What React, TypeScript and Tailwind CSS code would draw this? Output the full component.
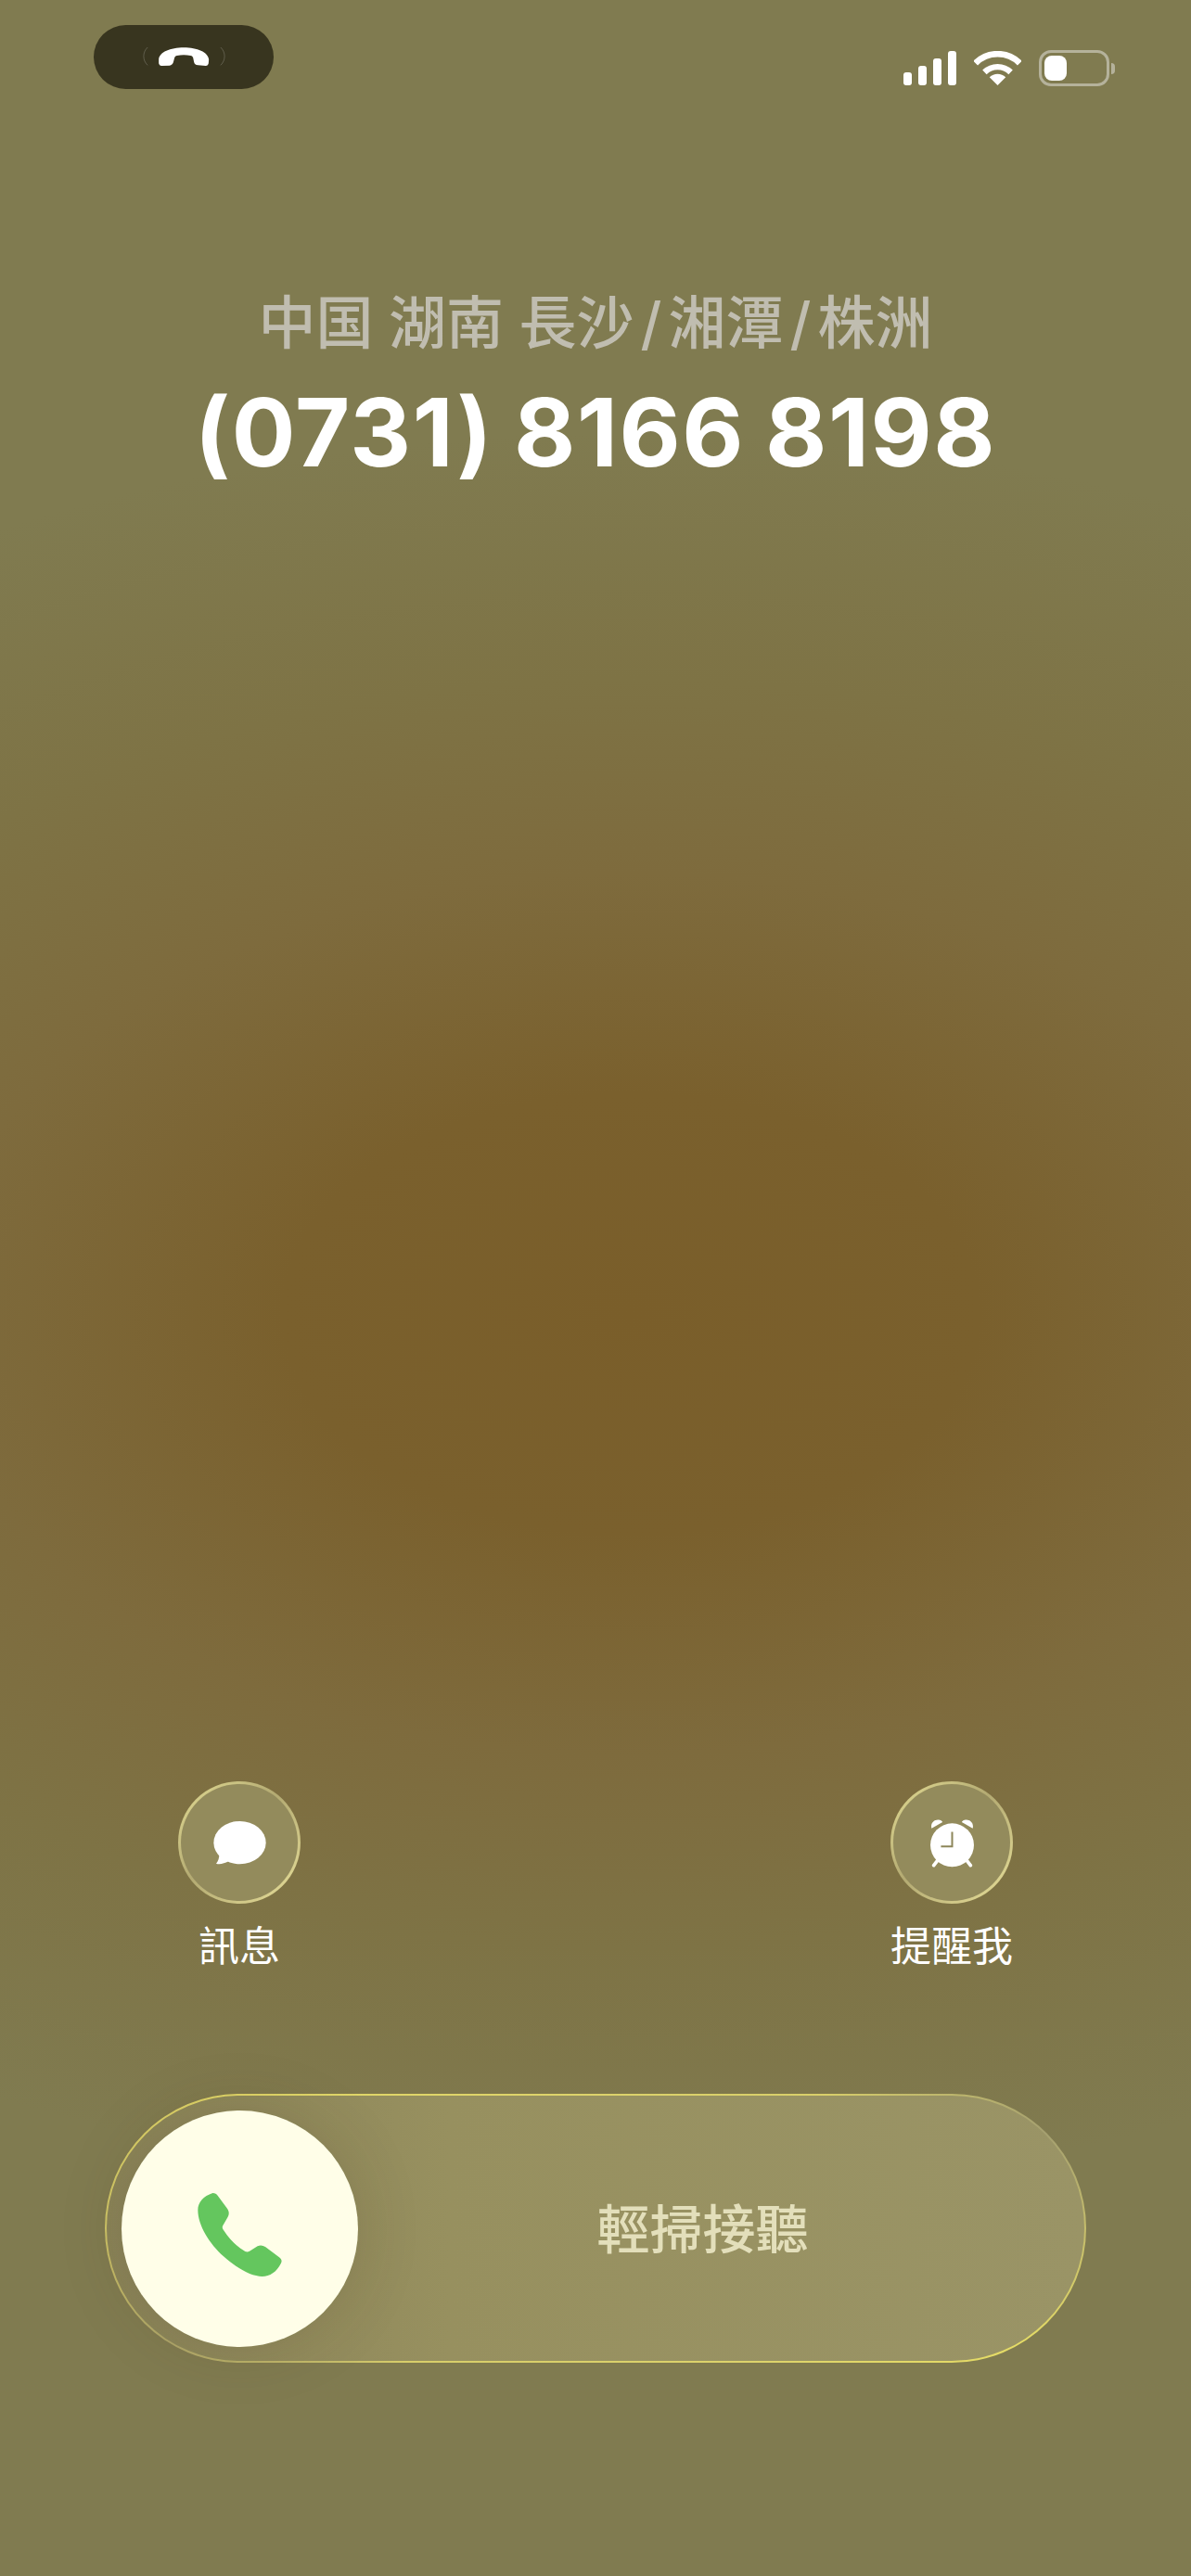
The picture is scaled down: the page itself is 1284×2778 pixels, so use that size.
const cjk = "font-['Inter','Noto_Sans_CJK_TC',sans-serif]"

function HangupIcon() {
  return (
    <svg viewBox="282 150 266 75" className="w-[89px] h-[25px]">
      <path d="M297 156 C280 172 280 198 297 214 M533 156 C550 172 550 198 533 214" fill="none" stroke="#fff" strokeOpacity="0.3" strokeWidth="2" />
      <path
        d="M333 195 C335 172 370 157 414 157 C458 157 492 172 495 195 L494 208 C493 213 490 216 485 216 L460 214 C452 213 448 210 447 204 L444 190 C443 186 440 184 436 183 C422 180 405 180 392 183 C388 184 385 186 384 190 L380 205 C378 211 374 214 368 215 L342 216 C337 216 334 213 333 208 Z"
        fill="#fff"
      />
    </svg>
  )
}

function SignalBars() {
  return (
    <div className="flex items-end gap-[6.5px]">
      <div className="w-[9.5px] h-[14px] rounded-[3px] bg-white" />
      <div className="w-[9.5px] h-[21px] rounded-[3px] bg-white" />
      <div className="w-[9.5px] h-[29px] rounded-[3px] bg-white" />
      <div className="w-[9.5px] h-[37px] rounded-[3px] bg-white" />
    </div>
  )
}

function WifiIcon() {
  return (
    <svg viewBox="360 102 152 110" className="w-[51px] h-[37px]">
      <path d="M365 141 A100 100 0 0 1 507 141" fill="none" stroke="#fff" strokeWidth="20" />
      <path d="M394 170 A60 60 0 0 1 478 170" fill="none" stroke="#fff" strokeWidth="19" />
      <path d="M436 212 L410 186 A37 37 0 0 1 462 186 Z" fill="#fff" />
    </svg>
  )
}

function Battery() {
  return (
    <div className="flex items-center gap-[2px]">
      <div className="w-[76px] h-[39px] rounded-[13px] border-[3px] border-[#b5b29b] p-[3px]">
        <div className="w-[24px] h-full rounded-[8px] bg-white" />
      </div>
      <div className="w-[4px] h-[12px] rounded-r-full bg-[#b5b29b]" />
    </div>
  )
}

function MessageIcon() {
  return (
    <svg viewBox="178 195 170 142" className="w-[57px] h-[47px]">
      <ellipse cx="263" cy="265" rx="85" ry="70" fill="#fff" />
      <path d="M196 300 C197 315 192 326 186 333 C197 337 213 333 226 326 Z" fill="#fff" />
    </svg>
  )
}

function AlarmIcon() {
  return (
    <svg viewBox="217 185 140 158" className="w-[47px] h-[53px]">
      <path d="M221 217 C216 198 232 186 247 190 C252 191 255 194 256 197 Z M353 217 C358 198 342 186 327 190 C322 191 319 194 318 197 Z" fill="#fff" />
      <path d="M240 320 L228 336 M334 320 L346 336" stroke="#fff" strokeWidth="11" strokeLinecap="round" />
      <circle cx="287" cy="271" r="70" fill="#fff" />
      <path d="M287 228 L287 275 L251 275" fill="none" stroke="#8d865a" strokeWidth="6" />
    </svg>
  )
}

function PhoneIcon() {
  return (
    <svg viewBox="337 375 271 270" className="w-[91px] h-[90px] mt-[13px]">
      <path
        d="M385 375 C392 375 398 378 402 385 L432 425 C438 433 439 443 434 452 L418 480 C415 485 416 489 420 495 C440 525 462 548 490 564 C495 566 499 566 504 563 L530 547 C538 543 547 544 555 549 L600 583 C608 589 610 596 605 604 C592 630 570 645 545 645 C510 645 465 620 420 580 C375 540 337 480 337 430 C337 405 355 385 385 375 Z"
        fill="#64c65e"
      />
    </svg>
  )
}

function ActionButton({ label, icon }: { label: string; icon: React.ReactNode }) {
  return (
    <div className="w-[132px] flex flex-col items-center">
      <div className="w-[132px] h-[132px] rounded-full border-[3px] border-transparent flex items-center justify-center [background:linear-gradient(#938b5c,#938b5c)_padding-box,linear-gradient(135deg,#e3dc94,#b3aa72_45%,#e8e09a)_border-box]">
        {icon}
      </div>
      <span className="mt-[18px] text-[44px] leading-[56px] text-white whitespace-nowrap">{label}</span>
    </div>
  )
}

export default function App() {
  return (
    <div className={`${cjk} w-[1284px] h-[2778px] overflow-hidden flex flex-col bg-[radial-gradient(ellipse_1500px_950px_at_53%_51%,#7a5e2a_0%,#7a602d_25%,#7e6b3d_50%,#7e7345_72%,#807b50_100%)]`}>
      {/* Status bar */}
      <div className="flex items-start justify-between pt-[27px] pl-[101px] pr-[82px]">
        <div className="w-[194px] h-[69px] rounded-full bg-[#38351f] flex items-center justify-center">
          <HangupIcon />
        </div>
        <div className="flex items-center gap-[19px] mt-[27px]">
          <SignalBars />
          <WifiIcon />
          <Battery />
        </div>
      </div>

      {/* Caller */}
      <div className="mt-[217px] flex flex-col items-center">
        <h2 className="text-[62px] leading-[72px] font-medium text-[#c0bdb0] whitespace-nowrap">
          中国 湖南 長沙<span className="mx-[7px]">/</span>湘潭<span className="mx-[7px]">/</span>株洲
        </h2>
        <h1 className="mt-[21px] text-[102px] leading-[120px] font-bold tracking-[1.6px] [word-spacing:-4px] text-white whitespace-nowrap">(0731) 8166 8198</h1>
      </div>

      {/* Actions */}
      <div className="mt-auto flex justify-between pl-[192px] pr-[192px]">
        <ActionButton label="訊息" icon={<MessageIcon />} />
        <ActionButton label="提醒我" icon={<AlarmIcon />} />
      </div>

      {/* Slide to answer */}
      <div className="mt-[131px] mb-[230px] ml-[113px] w-[1058px] h-[290px] rounded-[145px] border-[2.5px] border-transparent pl-[15.5px] flex items-center [background:linear-gradient(90deg,#8a8358,#97905f_35%,#9a9466)_padding-box,conic-gradient(#ddd36c_0deg,#d9cf6a_60deg,#a5a070_78deg,#c5bd6c_90deg,#e5dc66_105deg,#ddd36c_130deg,#d8ce6a_235deg,#aea66a_255deg,#cfc566_270deg,#e0d668_290deg,#ddd36c_360deg)_border-box]">
        <div className="w-[255px] h-[255px] rounded-full bg-[#fffee8] flex items-center justify-center shrink-0 shadow-[0_0_70px_rgba(60,50,20,0.15)]">
          <PhoneIcon />
        </div>
        <span className="ml-[258px] mt-[4px] text-[57px] leading-[70px] font-medium text-[#e3dfbb] whitespace-nowrap">輕掃接聽</span>
      </div>
    </div>
  )
}
